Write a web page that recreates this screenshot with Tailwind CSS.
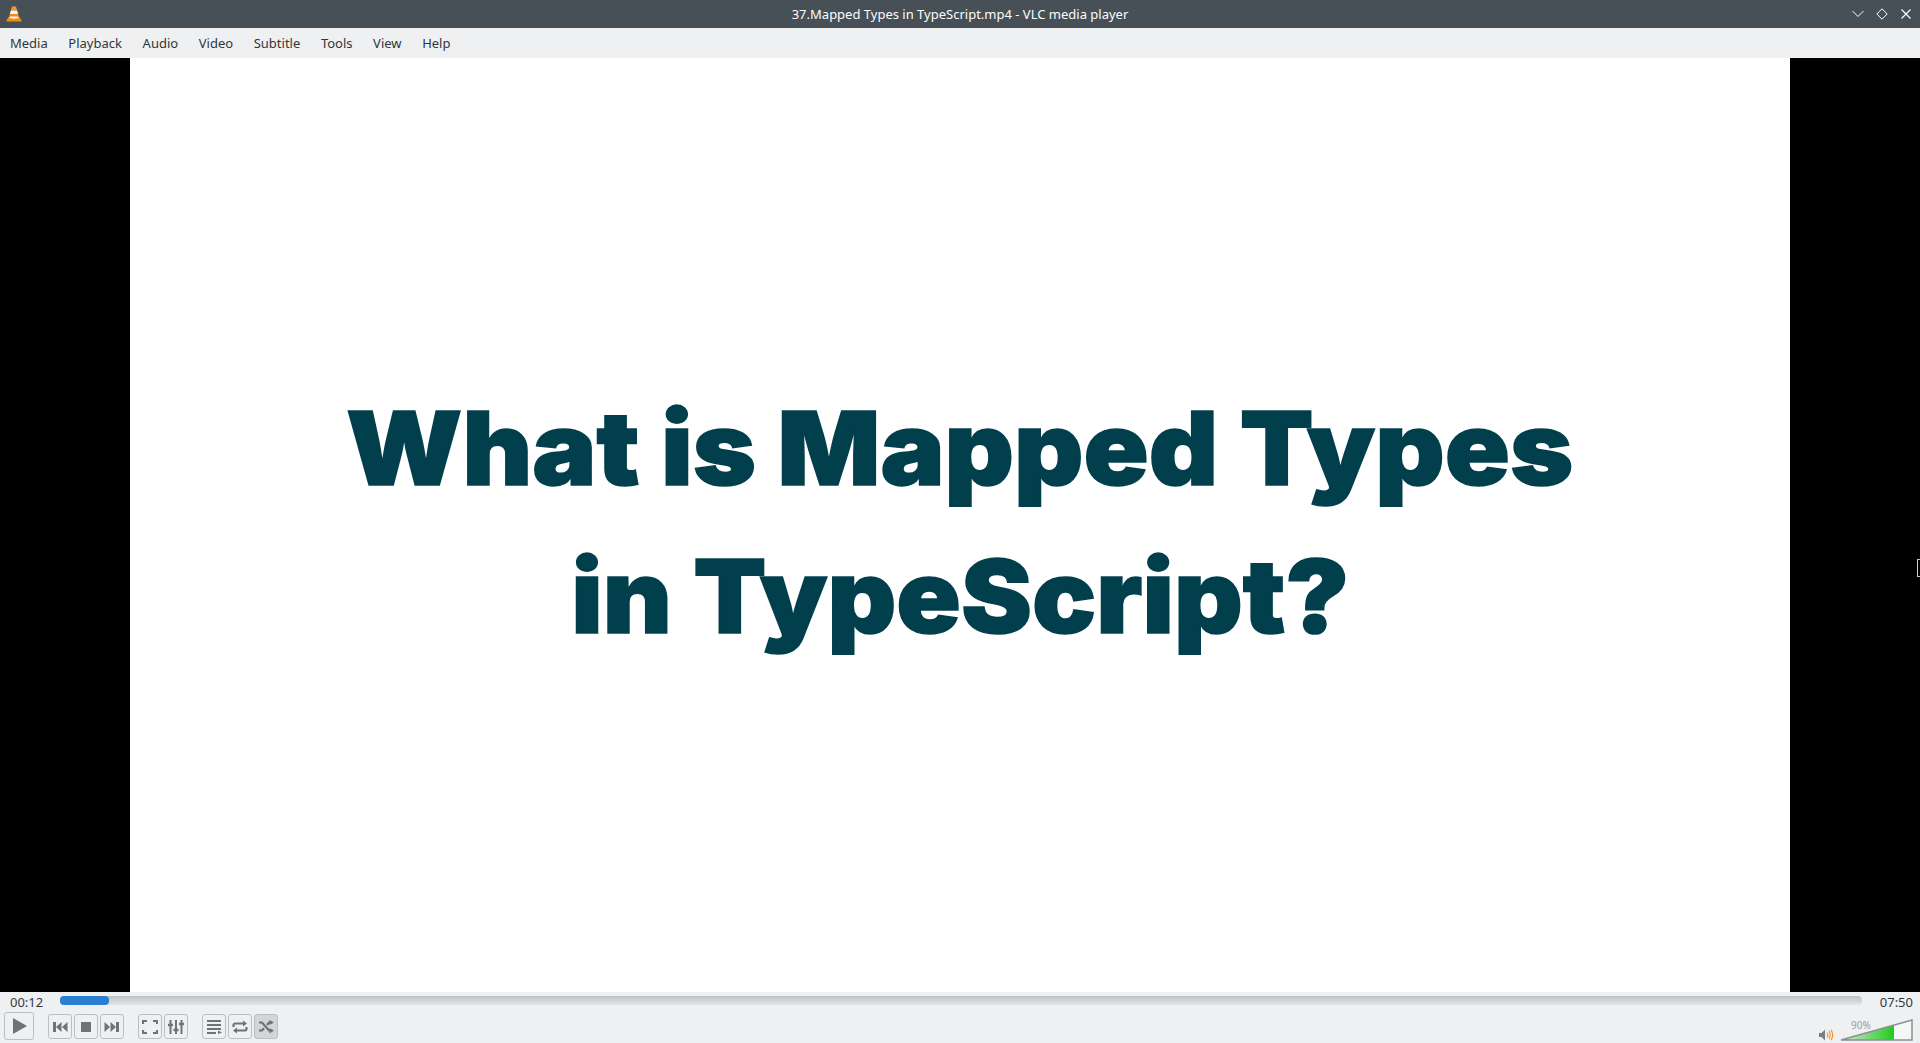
<!DOCTYPE html>
<html lang="en">
<head>
    <meta charset="UTF-8">
    <title>37.Mapped Types in TypeScript.mp4 - VLC media player</title>
    <script src="https://cdn.jsdelivr.net/npm/@tailwindcss/browser@4"></script>
</head>
<body class="h-screen overflow-hidden flex flex-col bg-[#eff0f1] font-['Noto_Sans',sans-serif] text-[13px] text-[#31363b]">
    <!-- title bar -->
    <div class="relative h-[28px] shrink-0 flex items-center justify-between bg-[#475057] text-[#fcfcfc]">
        <svg class="ml-[5px] w-[18px] h-[18px]" viewBox="0 0 18 18">
            <path d="M7 1.500h4l1.200 4H5.800z" fill="#f39a1e"/>
            <path d="M5.800 5.500h6.400l1 3.500H4.800z" fill="#f4f4f4"/>
            <path d="M4.800 9h8.400l.9 3.200H3.900z" fill="#ef8a14"/>
            <path d="M3.500 12h11l2 3.200q.4 1.300-1 1.300H2.500q-1.400 0-1-1.300z" fill="#f08c12"/>
            <path d="M5 11.500h8l.6 1.500q-4.600 1.600-9.200 0z" fill="#f7f2ea"/>
        </svg>
        <span class="absolute inset-x-0 top-[5px] text-center leading-[18px] whitespace-nowrap">37.Mapped Types in TypeScript.mp4 - VLC media player</span>
        <div class="relative flex items-center gap-[12px] mr-[8px]">
            <svg class="w-[12px] h-[12px]" viewBox="0 0 12 12" fill="none" stroke="#fcfcfc"><path d="M.5 3l5.500 5.500L11.500 3"/></svg>
            <svg class="w-[12px] h-[12px]" viewBox="0 0 12 12" fill="none" stroke="#fcfcfc"><path d="M6 .8L11.200 6 6 11.200.8 6z"/></svg>
            <svg class="w-[12px] h-[12px]" viewBox="0 0 12 12" fill="none" stroke="#fcfcfc" stroke-width="1.200"><path d="M1.500 1.500l9 9M10.500 1.500l-9 9"/></svg>
        </div>
    </div>

    <!-- menu bar -->
    <div class="h-[30px] shrink-0 flex items-center pt-[2px] pl-[10px] gap-[20.6px]">
        <span>Media</span>
        <span>Playback</span>
        <span>Audio</span>
        <span>Video</span>
        <span>Subtitle</span>
        <span>Tools</span>
        <span>View</span>
        <span>Help</span>
    </div>

    <!-- video -->
    <div class="relative flex-1 flex bg-black">
        <div class="mx-[130px] flex-1 flex flex-col items-center justify-center overflow-hidden bg-white pb-[6px] font-['Inter',sans-serif] font-black text-[#023f4d] text-[102px] leading-[148px] [-webkit-text-stroke:1.5px_#023f4d]">
            <span class="scale-x-[1.055] whitespace-nowrap">What is Mapped Types</span>
            <span class="scale-x-[1.045] whitespace-nowrap">in TypeScript?</span>
        </div>
        <div class="absolute right-0 top-[501px] w-[3px] h-[18px] bg-black border border-r-0 border-[#cccccc]"></div>
    </div>

    <!-- controls -->
    <div class="h-[51px] shrink-0 flex flex-col">
        <div class="h-[20px] flex items-start">
            <span class="w-[60px] pl-[10px] leading-[20px]">00:12</span>
            <div class="flex-1 mt-[4px] h-[9px] rounded-[4px] bg-gradient-to-b from-[#bfc1c2] to-[#e4e5e6]">
                <div class="h-full w-[49px] rounded-[4px] bg-[#2b7fd3]"></div>
            </div>
            <span class="w-[58px] pr-[7px] text-right leading-[20px]">07:50</span>
        </div>
        <div class="flex-1 flex items-start">
            <button class="ml-[4px] pl-[2px] w-[30px] h-[28px] flex items-center justify-center rounded-[3px] border border-[#bcbebf]">
                <svg class="w-[16px] h-[18px]" viewBox="0 0 16 18"><path d="M1 1l14 8-14 8z" fill="#6f7376"/></svg>
            </button>
            <div class="ml-[14px] mt-[2px] flex gap-[2px]">
                <button class="w-[24px] h-[25px] flex items-center justify-center rounded-[3px] border border-[#bcbebf]">
                    <svg class="w-[16px] h-[12px]" viewBox="0 0 16 12" fill="#6f7376"><path d="M1 1h3v10H1zM9.500 1v10L4 6zM15.500 1v10L10 6z"/></svg>
                </button>
                <button class="w-[24px] h-[25px] flex items-center justify-center rounded-[3px] border border-[#bcbebf]">
                    <svg class="w-[12px] h-[12px]" viewBox="0 0 12 12"><path d="M1 1h10v10H1z" fill="#6f7376"/></svg>
                </button>
                <button class="w-[24px] h-[25px] flex items-center justify-center rounded-[3px] border border-[#bcbebf]">
                    <svg class="w-[16px] h-[12px]" viewBox="0 0 16 12" fill="#6f7376"><path d="M15 1h-3v10h3zM6.500 1v10L12 6zM.5 1v10L6 6z"/></svg>
                </button>
            </div>
            <div class="ml-[14px] mt-[2px] flex gap-[2px]">
                <button class="w-[24px] h-[25px] flex items-center justify-center rounded-[3px] border border-[#bcbebf]">
                    <svg class="w-[16px] h-[14px]" viewBox="0 0 16 14" fill="none" stroke="#6f7376" stroke-width="2.200"><path d="M1 4V1h4M11 1h4v3M15 10v3h-4M5 13H1v-3"/></svg>
                </button>
                <button class="w-[24px] h-[25px] flex items-center justify-center rounded-[3px] border border-[#bcbebf]">
                    <svg class="w-[16px] h-[14px]" viewBox="0 0 16 14" fill="none" stroke="#6f7376" stroke-width="2"><path d="M2.500 0v14M8 0v14M13.500 0v14"/><path d="M0 5h5M5.500 10h5M11 4h5" stroke-width="2.500"/></svg>
                </button>
            </div>
            <div class="ml-[14px] mt-[2px] flex gap-[2px]">
                <button class="w-[24px] h-[25px] flex items-center justify-center rounded-[3px] border border-[#bcbebf]">
                    <svg class="w-[16px] h-[14px]" viewBox="0 0 16 14"><path d="M1 1h14M1 5h14M1 9h14M1 13h9" stroke="#6f7376" stroke-width="1.800" fill="none"/><path d="M12 10.500l4 2-4 1.500z" fill="#6f7376"/></svg>
                </button>
                <button class="w-[24px] h-[25px] flex items-center justify-center rounded-[3px] border border-[#bcbebf]">
                    <svg class="w-[16px] h-[14px]" viewBox="0 0 16 14"><path d="M1.500 7V5.500q0-2 2-2H12M14.500 7v1.500q0 2-2 2H4" fill="none" stroke="#6f7376" stroke-width="2.200"/><path d="M11 .5l4 3-4 3zM5 7.500l-4 3 4 3z" fill="#6f7376"/></svg>
                </button>
                <button class="w-[24px] h-[25px] flex items-center justify-center rounded-[3px] border border-[#bcbebf] bg-[#d3d5d6]">
                    <svg class="w-[16px] h-[14px]" viewBox="0 0 16 14"><path d="M1 2.500h3l7 8h2M1 10.500h3l2-2.300M9 5l2-2.500h2" fill="none" stroke="#6f7376" stroke-width="2.200"/><path d="M11.500 0L16 2.500 11.500 5zM11.500 8l4.500 2.500-4.500 3z" fill="#6f7376"/></svg>
                </button>
            </div>
            <div class="ml-auto mr-[7px] flex items-end">
                <svg class="w-[15px] h-[12px]" viewBox="0 0 15 12">
                    <path d="M0 4h2.500L6 .5v11L2.500 8H0z" fill="#7b7f82"/>
                    <path d="M8 3.500q1.500 2.500 0 5M10 2q2.500 4 0 8M12 .8q3.500 5.200 0 10.400" fill="none" stroke="#f39a2c" stroke-width="1.200"/>
                </svg>
                <div class="relative ml-[6px] mt-[7px] w-[73px] h-[22px]">
                    <svg class="block w-[73px] h-[22px]" viewBox="0 0 73 22">
                        <defs>
                            <linearGradient id="vol" x1="0" x2="1" y1="0" y2="0">
                                <stop offset="0" stop-color="#d9e8d9"/>
                                <stop offset="1" stop-color="#1fcb1f"/>
                            </linearGradient>
                        </defs>
                        <path d="M1 21L72 1v20z" fill="#f5f6f6"/>
                        <path d="M1 21L54 6.100V21z" fill="url(#vol)"/>
                        <path d="M1 21L72 1v20z" fill="none" stroke="#8d9093" stroke-width="1.500"/>
                    </svg>
                    <span class="absolute left-[11px] top-[0px] text-[10px] leading-[12px] text-[#9b9ea0]">90%</span>
                </div>
            </div>
        </div>
    </div>
</body>
</html>
